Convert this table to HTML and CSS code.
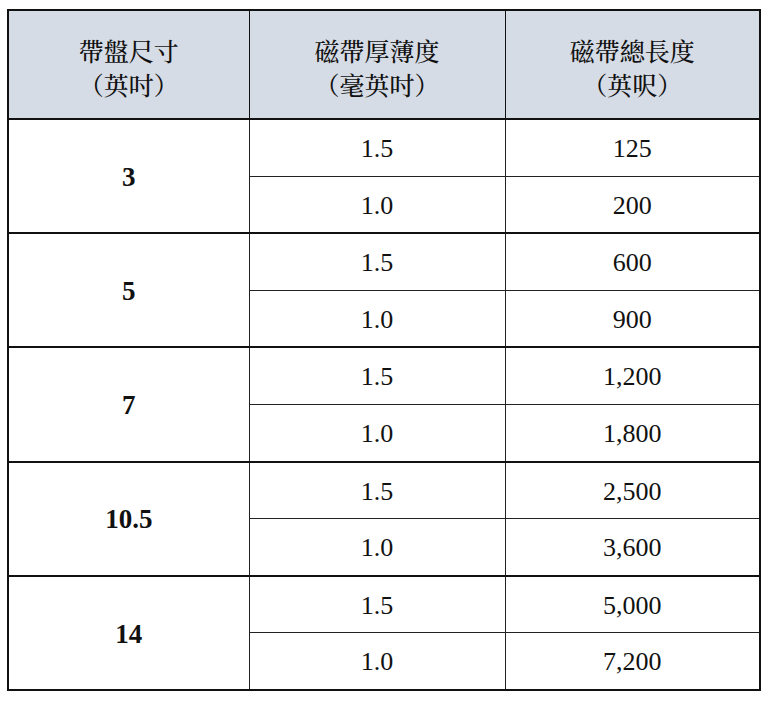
FILE: index.html
```html
<!DOCTYPE html>
<html lang="zh-Hant">
<head>
<meta charset="utf-8">
<title>磁帶規格</title>
<link rel="stylesheet" href="styles.css">
</head>
<body>
<table class="spec">
  <colgroup>
    <col class="c1"><col class="c2"><col class="c3">
  </colgroup>
  <thead>
    <tr class="head">
      <th>帶盤尺寸<br>（英吋）</th>
      <th>磁帶厚薄度<br>（毫英吋）</th>
      <th>磁帶總長度<br>（英呎）</th>
    </tr>
  </thead>
  <tbody>
    <tr class="top"><td rowspan="2" class="size">3</td><td>1.5</td><td>125</td></tr>
    <tr class="sub"><td>1.0</td><td>200</td></tr>
    <tr class="top"><td rowspan="2" class="size">5</td><td>1.5</td><td>600</td></tr>
    <tr class="sub"><td>1.0</td><td>900</td></tr>
    <tr class="top"><td rowspan="2" class="size">7</td><td>1.5</td><td>1,200</td></tr>
    <tr class="sub"><td>1.0</td><td>1,800</td></tr>
    <tr class="top"><td rowspan="2" class="size">10.5</td><td>1.5</td><td>2,500</td></tr>
    <tr class="sub"><td>1.0</td><td>3,600</td></tr>
    <tr class="top"><td rowspan="2" class="size">14</td><td>1.5</td><td>5,000</td></tr>
    <tr class="sub"><td>1.0</td><td>7,200</td></tr>
  </tbody>
</table>
</body>
</html>
```
FILE: styles.css
```css
html, body {
  margin: 0;
  padding: 0;
  background: #ffffff;
}
body {
  padding: 9px 0 0 7px;
}
.spec {
  border-collapse: collapse;
  table-layout: fixed;
  width: 752px;
  border: 2px solid #111;
  font-family: "Liberation Serif", "Times New Roman", serif;
  color: #111;
}
.c1 { width: 241px; }
.c2 { width: 256px; }
.c3 { width: 255px; }
.spec th {
  background: #d6dce5;
  height: 103px;
  padding: 4px 0 0;
  font-family: "Noto Serif CJK TC", "Noto Sans CJK TC", serif;
  font-weight: 500;
  font-size: 25px;
  line-height: 34px;
  text-align: center;
  vertical-align: middle;
  border: 1px solid #111;
  border-bottom: 2px solid #111;
}
.spec td {
  height: 53.1px;
  padding: 2.5px 0 0;
  text-align: center;
  vertical-align: middle;
  font-size: 26px;
  border: 1px solid #222;
}
.spec tr.top td {
  border-top: 2px solid #111;
}
.spec td.size {
  font-weight: bold;
  font-size: 27px;
}
```
